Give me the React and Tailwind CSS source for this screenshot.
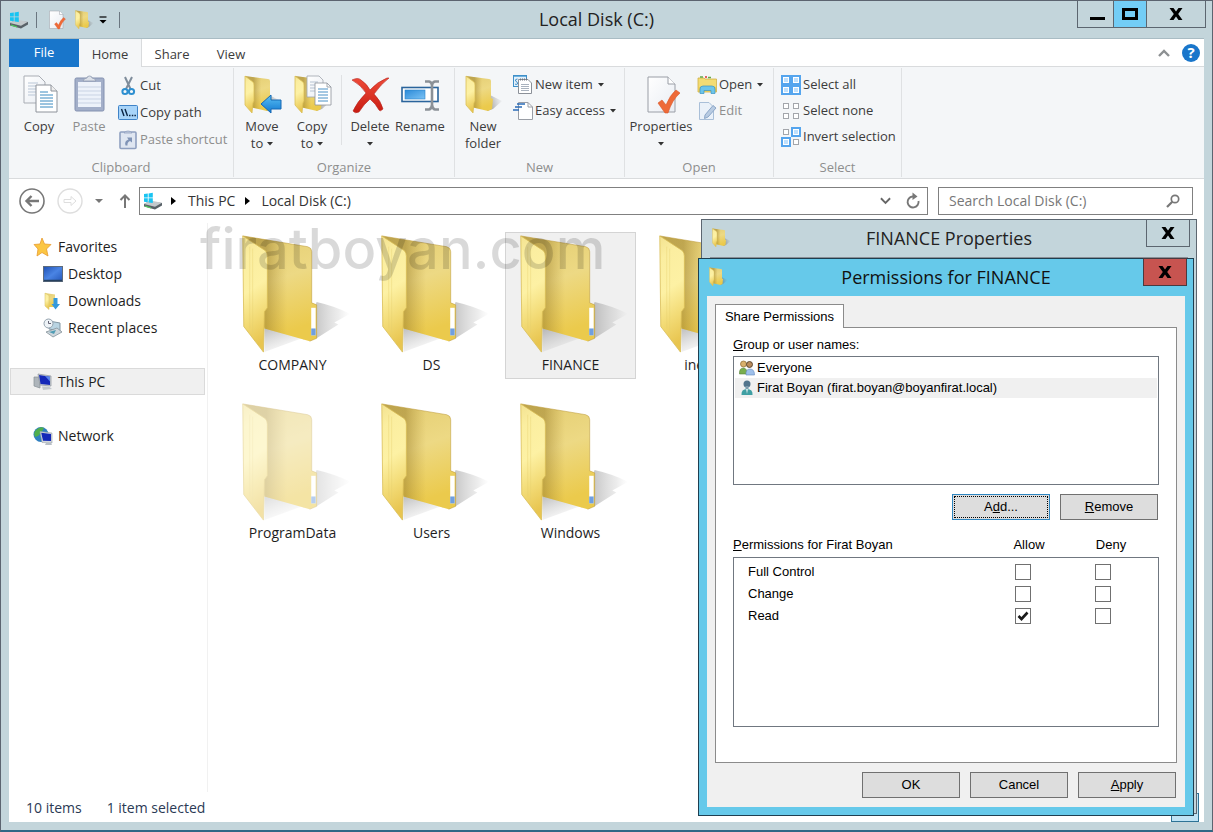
import React, { useState } from 'react'

const Gradients = () => (
  <svg className="absolute w-0 h-0" aria-hidden="true">
    <defs>
      <linearGradient id="flap" x1="0" y1="0" x2="0.15" y2="1">
        <stop offset="0" stopColor="#f3e291" />
        <stop offset="0.2" stopColor="#fbeea0" />
        <stop offset="0.5" stopColor="#fdf1a4" />
        <stop offset="0.75" stopColor="#f3dc78" />
        <stop offset="1" stopColor="#e8c550" />
      </linearGradient>
      <linearGradient id="back" x1="0" y1="0" x2="0.25" y2="1">
        <stop offset="0" stopColor="#e3cc70" />
        <stop offset="0.5" stopColor="#edd984" />
        <stop offset="1" stopColor="#ebca4c" />
      </linearGradient>
      <linearGradient id="fold" x1="0" y1="0" x2="1" y2="0">
        <stop offset="0.32" stopColor="#8a6d1c" stopOpacity="0.42" />
        <stop offset="0.6" stopColor="#a5842b" stopOpacity="0" />
      </linearGradient>
      <linearGradient id="shade" x1="0" y1="0.6" x2="1" y2="0.3">
        <stop offset="0" stopColor="#555" stopOpacity="0.6" />
        <stop offset="1" stopColor="#999" stopOpacity="0.05" />
      </linearGradient>
      <linearGradient id="cast" x1="0" y1="0" x2="1" y2="0">
        <stop offset="0" stopColor="#444" stopOpacity="0.45" />
        <stop offset="0.75" stopColor="#888" stopOpacity="0.16" />
        <stop offset="1" stopColor="#999" stopOpacity="0" />
      </linearGradient>
      <linearGradient id="under" x1="0" y1="0" x2="0.6" y2="1">
        <stop offset="0" stopColor="#555" stopOpacity="0.4" />
        <stop offset="1" stopColor="#999" stopOpacity="0.02" />
      </linearGradient>
      <linearGradient id="blue" x1="0" y1="0" x2="0" y2="1">
        <stop offset="0" stopColor="#5cc2f5" />
        <stop offset="1" stopColor="#1177d0" />
      </linearGradient>
      <linearGradient id="bar" x1="0" y1="0" x2="1" y2="1">
        <stop offset="0" stopColor="#2b8ad8" />
        <stop offset="1" stopColor="#7cc3f5" />
      </linearGradient>
      <linearGradient id="paper" x1="0" y1="0" x2="1" y2="1">
        <stop offset="0" stopColor="#fff" />
        <stop offset="1" stopColor="#e9edf3" />
      </linearGradient>
      <linearGradient id="screen" x1="0" y1="0" x2="1" y2="1">
        <stop offset="0" stopColor="#1e50b4" />
        <stop offset="0.5" stopColor="#4a84e4" />
        <stop offset="1" stopColor="#2456b8" />
      </linearGradient>
      <linearGradient id="red" x1="0" y1="0" x2="0" y2="1">
        <stop offset="0" stopColor="#ee4a38" />
        <stop offset="1" stopColor="#c81c12" />
      </linearGradient>
    </defs>
  </svg>
)

const BigFolder = ({ faded }) => (
  <svg viewBox="0 1 131 122" className={`w-full h-[122px] ${faded ? 'opacity-50' : ''}`}>
    <path d="M90 70Q108 74 124 82L108 91 112 93 90 107 76 108Z" fill="url(#cast)" />
    <path d="M37 96L75 107 37 121Z" fill="url(#under)" />
    <path d="M15 3L81 14Q85 15 85 19L85 71 90 73 90 107 83 110 37 97Z" fill="url(#back)" />
    <path d="M15 3L81 14Q85 15 85 19L85 71 90 73 90 107 83 110 37 97Z" fill="url(#fold)" />
    <path d="M15 3L81 14Q85 15 85 19L85 71 90 73 90 107 83 110" fill="none" stroke="#b8942f" strokeOpacity="0.5" />
    <path d="M84.500 76H89V104H84.500Z" fill="#fff" />
    <path d="M84.500 97H89V104H84.500Z" fill="#6f9fe0" />
    <path d="M15 3L38 18Q40 20 40 24L40 76 37 80 36 121 16 95Z" fill="url(#flap)" stroke="#d9bd55" strokeWidth="0.8" />
    <path d="M22 14V97M25 16V101" stroke="#e6cf6e" strokeWidth="0.7" opacity="0.5" />
  </svg>
)

const FolderShape = () => (
  <>
    <path d="M25 19L39 26 30 34 24 36Z" fill="url(#shade)" />
    <path d="M3 1L26 4Q28 4 28 6L28 23 30 24 29 34 25 36 8 32Z" fill="url(#back)" />
    <path d="M3 1L26 4Q28 4 28 6L28 23 30 24 29 34 25 36 8 32Z" fill="url(#fold)" />
    <path d="M3 1L11 7Q12 8 12 10L12 26 11 28 10 38 3 30Z" fill="url(#flap)" stroke="#dbbf55" strokeWidth="0.8" />
  </>
)

const SmallFolder = ({ className = 'size-5' }) => (
  <svg viewBox="0 0 40 40" className={className}><FolderShape /></svg>
)

const DriveIcon = () => (
  <svg viewBox="0 0 20 18" className="w-5 h-[18px] shrink-0">
    <path d="M1 12L6 9.500 19 11 19 13.500 12 17.500 1 14.500Z" fill="#596268" />
    <path d="M1 12L7 8.500 19 10.800 12 14.800Z" fill="#c3c9cc" />
    <path d="M2 14L8 16" stroke="#4fd05a" strokeWidth="1.200" />
    <path d="M1 2L4.800 1.500V5.500H1ZM5.600 1.400L9.800 0.800V5.500H5.600ZM1 6.300H4.800V10.300L1 9.800ZM5.600 6.300H9.800V11L5.600 10.400Z" fill="#19c4f2" />
  </svg>
)

const PageCheck = ({ className }) => (
  <svg viewBox="0 0 40 40" className={className}>
    <path d="M7 2H27L34 9V37H7Z" fill="url(#paper)" stroke="#9a9ea6" />
    <path d="M27 2V9H34" fill="#fff" stroke="#9a9ea6" />
    <path d="M17 28L21 25 25 30Q29 20 35 15L39 18Q31 25 27 38H24Z" fill="#ee6a38" stroke="#d9572a" strokeWidth="0.6" />
  </svg>
)

const Pages = () => (
  <svg viewBox="0 0 40 40" className="size-10">
    <path d="M5 1H20L26 7V28H5Z" fill="url(#paper)" stroke="#a9adb4" />
    <path d="M9 8H19M9 11H22M9 14H18M9 17H18M9 20H16" stroke="#b9c6d6" />
    <path d="M17 10H32L38 16V37H17Z" fill="#fff" stroke="#8d929a" />
    <path d="M32 10V16H38" fill="#eee" stroke="#8d929a" />
    <path d="M21 17H29M21 20H34M21 23H34M21 26H34M21 29H34M21 32H34" stroke="#3b8ac0" />
  </svg>
)

const Clipboard = () => (
  <svg viewBox="0 0 40 40" className="size-10">
    <rect x="6" y="3" width="29" height="33" rx="1.500" fill="#a3afc9" stroke="#8391b0" />
    <path d="M9 7H32V32H9Z" fill="#edf2fa" />
    <path d="M9 12H32M9 16H32M9 20H32M9 24H32M9 28H32" stroke="#c9d3e4" />
    <path d="M14 6Q15 3 18 3Q18 1 20.500 1Q23 1 23 3Q26 3 27 6Z" fill="#dce1e9" stroke="#8f9ab0" strokeWidth="0.8" />
  </svg>
)

const MoveTo = () => (
  <svg viewBox="0 0 40 40" className="size-10">
    <FolderShape />
    <path d="M19 29L29 20V25H39V34H29V38Z" fill="url(#blue)" stroke="#1668b4" />
  </svg>
)

const CopyTo = () => (
  <svg viewBox="0 0 40 40" className="size-10">
    <FolderShape />
    <path d="M15 1H27L31 5V22H15Z" fill="url(#paper)" stroke="#a0a4ac" strokeWidth="0.8" />
    <path d="M18 7H26M18 10H26M18 13H26M18 16H24" stroke="#b6c3d2" />
    <path d="M23 8H35L39 12V30H23Z" fill="#fff" stroke="#8d929a" strokeWidth="0.8" />
    <path d="M35 8V12H39" fill="none" stroke="#8d929a" strokeWidth="0.8" />
    <path d="M26 14H36M26 17H36M26 20H36M26 23H36M26 26H36" stroke="#4a91c6" />
  </svg>
)

const DeleteX = () => (
  <svg viewBox="0 0 40 40" className="size-10">
    <path d="M2 5Q8 2 11 5Q17 9 20 15Q27 7 37 3H39Q31 9 24 19Q31 26 33 34Q30 37 29 35Q26 29 20 24Q14 29 9 37Q5 39 3 36Q7 27 16 18Q11 10 2 5Z" fill="url(#red)" stroke="#b5211b" strokeWidth="0.6" />
  </svg>
)

const RenameIcon = () => (
  <svg viewBox="0 0 40 40" className="size-10">
    <rect x="2" y="12.500" width="36" height="14" fill="#fff" stroke="#2a649c" strokeWidth="1.600" />
    <rect x="5" y="15" width="20" height="9" fill="url(#bar)" stroke="#2b83c9" strokeWidth="0.6" />
    <path d="M25 6.500H29Q31.500 7 32 10V30Q31.500 34 29 34.500H25M39 6.500H35Q32.500 7 32 10M39 34.500H35Q32.500 34 32 30" fill="none" stroke="#8b9197" strokeWidth="2.600" />
  </svg>
)

const CutIcon = () => (
  <svg viewBox="0 0 20 20" className="size-5">
    <path d="M7 1L12.500 13M14 1L8 13" stroke="#7f8d9b" strokeWidth="2" fill="none" />
    <circle cx="7" cy="15.500" r="2.600" fill="none" stroke="#2d8fd0" strokeWidth="2" />
    <circle cx="13.500" cy="15.500" r="2.600" fill="none" stroke="#2d8fd0" strokeWidth="2" />
  </svg>
)

const PathIcon = () => (
  <svg viewBox="0 0 20 20" className="size-5">
    <rect x="0.500" y="2.500" width="19" height="14" rx="1" fill="#a8d4f9" stroke="#3f83c8" />
    <path d="M3.500 6L6 13M7 6L9.500 13" stroke="#0b2545" strokeWidth="1.400" />
    <path d="M11 12.500H12.500M13.800 12.500H15.300M16.400 12.500H17.900" stroke="#0b2545" strokeWidth="1.400" />
  </svg>
)

const ShortcutIcon = () => (
  <svg viewBox="0 0 20 20" className="size-5">
    <rect x="2" y="2" width="16" height="16.500" rx="1" fill="#dfe6f1" stroke="#8fa0c0" strokeWidth="1.600" />
    <path d="M6 3Q7 1 10 1Q13 1 14 3Z" fill="#c4cddd" stroke="#8fa0c0" strokeWidth="0.8" />
    <path d="M7.500 15.500Q6 11 10.500 9.500L9 7.500H14V12.500L12 11Q9 12 9.500 15.500Z" fill="#7f93b6" />
  </svg>
)

const NewItemIcon = () => (
  <svg viewBox="0 0 20 20" className="size-5">
    <rect x="0.500" y="0.500" width="13" height="11" fill="#e4f1fb" stroke="#3f8fc8" />
    <path d="M1 1.500H13" stroke="#6fb2e0" />
    <path d="M4.500 4Q2 4 2.500 6Q5 7 4.500 9Q3 10 2 9" stroke="#3f8fc8" fill="none" />
    <path d="M5.500 4.500H15L18.500 8V18.500H5.500Z" fill="#fff" stroke="#8b9098" />
    <path d="M7 4.500H15" stroke="#707780" strokeDasharray="1 1" strokeWidth="2" />
    <path d="M8 9.500H16M8 11.500H16M8 13.500H16M8 15.500H16" stroke="#a9b2be" />
  </svg>
)

const EasyIcon = () => (
  <svg viewBox="0 0 20 20" className="size-5">
    <path d="M5.500 1.500H15L19.500 6V18.500H5.500Z" fill="#fff" stroke="#9a9ea6" />
    <path d="M15 1.500V6H19.500" fill="none" stroke="#9a9ea6" />
    <path d="M4 3H12M2 6H9M0 9H6" stroke="#2b6cb8" strokeWidth="1.300" />
  </svg>
)

const OpenIcon = () => (
  <svg viewBox="0 0 20 20" className="size-5">
    <path d="M1 3H7L8 4H19.500V17H1Z" fill="#f3dc74" stroke="#d0b148" strokeWidth="0.8" />
    <path d="M1.500 12H19V16.500H1.500Z" fill="#ecc94f" />
    <path d="M3 2H6M11 2.500H14" stroke="#66a948" strokeWidth="1.500" />
    <path d="M8 2H10" stroke="#d33" strokeWidth="1.500" />
    <path d="M3 18.500V14Q3 11 6 11H15Q18 11 18 14V18.500H14V15.500H7V18.500Z" fill="#6cc5ea" stroke="#3a93c4" strokeWidth="0.7" />
  </svg>
)

const EditIcon = () => (
  <svg viewBox="0 0 20 20" className="size-5">
    <path d="M2.500 1.500H12L16.500 6V18.500H2.500Z" fill="#eaf1f9" stroke="#a9bfd8" />
    <path d="M8 14L16 4.500 19 7 11 16 7.500 17.500Z" fill="#b8cbe2" stroke="#8ba6c8" />
  </svg>
)

const Squares = ({ on }) => (
  <svg viewBox="0 0 20 20" className="size-5">
    {[[0, 0], [10, 0], [0, 10], [10, 10]].map(([x, y], i) => (
      on[i] ? (
        <g key={i}>
          <rect x={x} y={y} width="10" height="10" fill="#55a5ee" />
          <rect x={x + 2.5} y={y + 2.5} width="5" height="5" fill="#bfe0fd" stroke="#fff" />
        </g>
      ) : (
        <rect key={i} x={x + 2.5} y={y + 2.5} width="5" height="5" fill="#fff" stroke="#a3a6ab" />
      )
    ))}
  </svg>
)

const Caret = ({ className = 'text-[#333]' }) => (
  <svg viewBox="0 0 6 4" className={`inline-block w-[6px] h-1 ${className}`}>
    <path d="M0 0H6L3 3.500Z" fill="currentColor" />
  </svg>
)

const CloseX = () => (
  <svg viewBox="0 0 14 12" className="w-[14px] h-3">
    <path d="M0.500 0H4.500L7 3.500 9.500 0H13.500L9.200 6 13.500 12H9.500L7 8.500 4.500 12H0.500L4.800 6Z" fill="#000" />
  </svg>
)

const BigButton = ({ icon, label, second, caret, width = 'w-[50px]', disabled }) => (
  <button className={`flex flex-col items-center shrink-0 ${width} ${disabled ? 'text-[#8e8e8e]' : ''}`}>
    {icon}
    <span className="mt-[3px] leading-[17px] whitespace-nowrap">{label}</span>
    <span className="flex items-center gap-1 h-[17px] leading-[17px]">
      {second}
      {caret && <Caret />}
    </span>
  </button>
)

const SmallButton = ({ icon, label, caret, disabled }) => (
  <button className={`flex items-center h-[26px] whitespace-nowrap ${disabled ? 'text-[#8e8e8e]' : ''}`}>
    {icon}
    <span className="ml-[2px] mr-[5px]">{label}</span>
    {caret && <Caret />}
  </button>
)

const Group = ({ title, width, children }) => (
  <section className={`flex flex-col shrink-0 border-r border-[#dfe1e3] my-px ${width}`}>
    <div className="flex grow">{children}</div>
    <div className="text-center text-[#8e8e8e] leading-5">{title}</div>
  </section>
)

const Ribbon = () => (
  <div className="flex h-28 shrink-0 bg-[#f4f6f8] border-b border-[#d9dbdd] text-[13px] text-[#3c3c3c]">
    <Group title="Clipboard" width="w-[225px]">
      <div className="flex pl-[5px] pt-[7px]">
        <BigButton icon={<Pages />} label="Copy" />
        <BigButton icon={<Clipboard />} label="Paste" disabled />
      </div>
      <div className="flex flex-col pl-1 pt-[5px] gap-px">
        <SmallButton icon={<CutIcon />} label="Cut" />
        <SmallButton icon={<PathIcon />} label="Copy path" />
        <SmallButton icon={<ShortcutIcon />} label="Paste shortcut" disabled />
      </div>
    </Group>
    <Group title="Organize" width="w-[221px]">
      <div className="flex pl-[3px] pt-[7px]">
        <BigButton icon={<MoveTo />} label="Move" second="to" caret />
        <BigButton icon={<CopyTo />} label="Copy" second="to" caret />
        <div className="w-px h-[70px] ml-1 mr-[3px] bg-[#dfe1e3]"></div>
        <BigButton icon={<DeleteX />} label="Delete" caret />
        <BigButton icon={<RenameIcon />} label="Rename" />
      </div>
    </Group>
    <Group title="New" width="w-[170px]">
      <div className="flex pl-[3px] pt-[7px]">
        <BigButton icon={<SmallFolder className="size-10" />} label="New" second="folder" />
      </div>
      <div className="flex flex-col pl-[5px] pt-1">
        <SmallButton icon={<NewItemIcon />} label="New item" caret />
        <SmallButton icon={<EasyIcon />} label="Easy access" caret />
      </div>
    </Group>
    <Group title="Open" width="w-[149px]">
      <div className="flex pl-px pt-[7px]">
        <BigButton icon={<PageCheck className="size-10" />} label="Properties" caret width="w-[70px]" />
      </div>
      <div className="flex flex-col pl-px pt-1">
        <SmallButton icon={<OpenIcon />} label="Open" caret />
        <SmallButton icon={<EditIcon />} label="Edit" disabled />
      </div>
    </Group>
    <Group title="Select" width="w-[128px]">
      <div className="flex flex-col pl-[7px] pt-1">
        <SmallButton icon={<Squares on={[1, 1, 1, 1]} />} label="Select all" />
        <SmallButton icon={<Squares on={[0, 0, 0, 0]} />} label="Select none" />
        <SmallButton icon={<Squares on={[0, 1, 1, 0]} />} label="Invert selection" />
      </div>
    </Group>
  </div>
)

const TitleBar = () => (
  <header className="relative flex h-[37px] shrink-0">
    <div className="flex items-center">
      <DriveIcon />
      <span className="w-px h-4 ml-[7px] mr-[9px] bg-[#6b7680]"></span>
      <PageCheck className="size-5" />
      <SmallFolder className="size-5 ml-2" />
      <svg viewBox="0 0 8 8" className="size-2 ml-[5px]">
        <path d="M0.500 1H7.500" stroke="#000" strokeWidth="1.200" />
        <path d="M0.500 4H7.500L4 7.500Z" />
      </svg>
      <span className="w-px h-4 ml-3 bg-[#6b7680]"></span>
    </div>
    <h1 className="absolute inset-x-0 top-0 pr-5 text-center text-[18px] leading-[37px] text-[#222] pointer-events-none">
      Local Disk (C:)
    </h1>
    <div className="flex ml-auto -mr-[2px] h-[27px] border border-t-0 border-[#5c6670]">
      <button aria-label="Minimize" className="flex items-end justify-center w-[35px] pl-[3px] pb-[7px]">
        <span className="w-[15px] h-[3px] bg-black"></span>
      </button>
      <button aria-label="Maximize" className="flex items-center justify-center w-[34px] bg-[#73cdf6] border-x border-[#5c6670]">
        <span className="w-4 h-3 border-[3px] border-black"></span>
      </button>
      <button aria-label="Close" className="flex items-center justify-center w-[58px]"><CloseX /></button>
    </div>
  </header>
)

const TabBar = () => (
  <nav className="flex h-[29px] shrink-0 bg-white border-t border-[#a9bcc4] text-[13px] text-[#3c3c3c]">
    <button className="w-[70px] bg-[#1976cb] text-white">File</button>
    <button className="w-[63px] pt-1 bg-[#f4f6f8] border-r border-[#d9dbdd]">Home</button>
    <button className="w-[60px] pt-1 border-b border-[#d9dbdd]">Share</button>
    <button className="w-[58px] pt-1 border-b border-[#d9dbdd]">View</button>
    <div className="flex items-center justify-end grow gap-3 pr-1 border-b border-[#d9dbdd]">
      <svg viewBox="0 0 12 8" className="w-3 h-2">
        <path d="M1 7L6 2L11 7" fill="none" stroke="#8d9092" strokeWidth="2.400" />
      </svg>
      <button aria-label="Help" className="flex items-center justify-center size-[18px] rounded-full bg-[#1976cb] text-white font-bold text-[15px]">?</button>
    </div>
  </nav>
)

const AddressBar = () => (
  <div className="flex items-center h-11 shrink-0 pl-[10px] pr-[11px] text-[14px] text-[#333]">
    <button aria-label="Back">
      <svg viewBox="0 0 26 26" className="size-[26px]">
        <circle cx="13" cy="13" r="12" fill="none" stroke="#777" strokeWidth="1.600" />
        <path d="M20 13H8M12.500 8L7.500 13L12.500 18" fill="none" stroke="#777" strokeWidth="2.400" />
      </svg>
    </button>
    <button aria-label="Forward" className="ml-3">
      <svg viewBox="0 0 26 26" className="size-[26px]">
        <circle cx="13" cy="13" r="12" fill="none" stroke="#dedede" strokeWidth="1.400" />
        <path d="M7 11.500H14V8.500L19 13L14 17.500V14.500H7Z" fill="none" stroke="#dedede" />
      </svg>
    </button>
    <svg viewBox="0 0 8 4" className="w-2 h-1 ml-3 text-[#777]"><path d="M0 0H8L4 4Z" fill="currentColor" /></svg>
    <button aria-label="Up" className="ml-4 mr-2">
      <svg viewBox="0 0 12 16" className="w-3 h-4">
        <path d="M6 15V3M1.500 7L6 2.500L10.500 7" fill="none" stroke="#777" strokeWidth="2" />
      </svg>
    </button>
    <div className="flex items-center grow h-7 pl-[3px] pr-[6px] pb-px border border-[#808080]">
      <DriveIcon />
      <svg viewBox="0 0 5 8" className="w-[5px] h-2 ml-2 mr-3"><path d="M0 0L5 4L0 8Z" /></svg>
      <a href="#pc" className="whitespace-nowrap">This PC</a>
      <svg viewBox="0 0 5 8" className="w-[5px] h-2 ml-[10px] mr-[11px]"><path d="M0 0L5 4L0 8Z" /></svg>
      <a href="#c" className="whitespace-nowrap">Local Disk (C:)</a>
      <svg viewBox="0 0 12 8" className="w-[11px] h-2 ml-auto mr-[14px]">
        <path d="M1 1L6 6L11 1" fill="none" stroke="#666" strokeWidth="2" />
      </svg>
      <svg viewBox="0 0 16 18" className="w-4 h-[18px]">
        <path d="M9 4.500H7.500A5.500 5.500 0 1 0 13.500 9" fill="none" stroke="#777" strokeWidth="1.900" />
        <path d="M7.500 0.500L12.500 4.500L7.500 8Z" fill="#777" />
      </svg>
    </div>
    <label className="flex items-center w-[255px] h-7 ml-[10px] pl-[10px] pr-3 pb-px border border-[#808080]">
      <input
        aria-label="Search"
        placeholder="Search Local Disk (C:)"
        className="grow min-w-0 outline-none placeholder:text-[#777]"
      />
      <svg viewBox="0 0 14 14" className="size-[14px]">
        <circle cx="9" cy="5" r="3.700" fill="none" stroke="#777" strokeWidth="1.700" />
        <path d="M6.300 7.700L1 13" stroke="#777" strokeWidth="2.200" />
      </svg>
    </label>
  </div>
)

const StarIcon = () => (
  <svg viewBox="0 0 20 20" className="size-5">
    <path d="M9 1L11.500 7L18 7.500L13.500 12L15 19L9 15.500L4 19L5 12L1 7.500L7 7Z" fill="#fbc643" stroke="#e79a2f" strokeWidth="0.8" />
  </svg>
)

const DesktopIcon = () => (
  <svg viewBox="0 0 20 20" className="size-5">
    <rect x="0.500" y="2.500" width="19" height="15" fill="url(#screen)" stroke="#5d6b7c" />
    <path d="M1 16.500H19" stroke="#26405f" strokeWidth="1.500" />
  </svg>
)

const DownloadsIcon = () => (
  <svg viewBox="0 0 20 20" className="size-5">
    <path d="M2 2L12 3.500V16L4 16Z" fill="url(#back)" />
    <path d="M2 2L6 4.500V18.500L2 15Z" fill="url(#flap)" stroke="#dcc76d" strokeWidth="0.6" />
    <path d="M10.500 7H14.500V13H17L12.500 18.500L8.500 13H10.500Z" fill="#3399dd" />
  </svg>
)

const RecentIcon = () => (
  <svg viewBox="0 0 20 20" className="size-5">
    <path d="M6 3L17 5V13L6 11Z" fill="#b9d4e2" stroke="#8397a3" />
    <path d="M3 14L14 10L19 14L10 19Z" fill="#cfd7dc" stroke="#84929a" strokeWidth="0.8" />
    <path d="M6 14L13 12L11 16Z" fill="#4f9cb4" />
    <circle cx="5.500" cy="5.500" r="4.500" fill="#eef3f7" stroke="#94a2ae" />
    <path d="M5.500 3V5.500H8" stroke="#667" fill="none" />
  </svg>
)

const PcIcon = () => (
  <svg viewBox="0 0 20 20" className="size-5">
    <path d="M1 5H7V16L1 14Z" fill="#aeb5bb" stroke="#878f96" strokeWidth="0.7" />
    <path d="M5 2L18 4V14L7 13Z" fill="#c7cdd3" stroke="#8d949c" strokeWidth="0.7" />
    <path d="M6 3L17 4.700V13L7.500 12Z" fill="#1428b8" />
    <path d="M12 4L17 4.700V9.500Z" fill="#5a86ec" />
    <path d="M9 14.500H16L19 17L10 18Z" fill="#c2c8cd" />
  </svg>
)

const NetworkIcon = () => (
  <svg viewBox="0 0 20 20" className="size-5">
    <circle cx="8" cy="8.500" r="7.500" fill="#2f7fc0" />
    <path d="M3 4Q7 0 11 2L8 7L5 10L2 11Q0 7 3 4Z" fill="#4fae4c" />
    <path d="M7 5.500L19 7V17L9 16.500Z" fill="#d3d8dc" stroke="#99a1a8" strokeWidth="0.6" />
    <path d="M8.200 6.700L18 8V15L10 14.800Z" fill="#1428b8" />
    <path d="M13 17H18L19 19H12Z" fill="#b9c0c6" />
  </svg>
)

const NavItem = ({ icon, label, nested, active, className = '' }) => (
  <a
    href="#"
    className={`flex items-center gap-[5px] h-[27px] border ${nested ? 'pl-8 gap-1' : 'pl-[22px]'} ${active ? 'bg-[#f0f0f0] border-[#dadada]' : 'border-transparent'} ${className}`}
  >
    {icon}
    <span>{label}</span>
  </a>
)

const Sidebar = () => (
  <aside className="w-[199px] shrink-0 pl-px pr-[2px] pt-[10px] border-r border-[#f1f1f1] text-[14px] text-[#1e1e1e]">
    <NavItem icon={<StarIcon />} label="Favorites" />
    <NavItem icon={<DesktopIcon />} label="Desktop" nested />
    <NavItem icon={<DownloadsIcon />} label="Downloads" nested />
    <NavItem icon={<RecentIcon />} label="Recent places" nested />
    <NavItem icon={<PcIcon />} label="This PC" active className="mt-[27px]" />
    <NavItem icon={<NetworkIcon />} label="Network" className="mt-[27px]" />
  </aside>
)

const folders = [
  { name: 'COMPANY' },
  { name: 'DS' },
  { name: 'FINANCE', selected: true },
  { name: 'inetpub' },
  { name: 'ProgramData', faded: true },
  { name: 'Users' },
  { name: 'Windows' },
]

const FolderGrid = () => (
  <main className="relative grow pt-[9px] pl-[19px]">
    <div className="grid grid-cols-[repeat(4,131px)] gap-x-2 gap-y-[21px]">
      {folders.map((f) => (
        <button
          key={f.name}
          className={`flex flex-col h-[147px] border text-[14px] text-[#1e1e1e] ${f.selected ? 'bg-[#f0f0f0] border-[#d4d4d4]' : 'border-transparent'}`}
        >
          <BigFolder faded={f.faded} />
          <span className="self-center leading-5">{f.name}</span>
        </button>
      ))}
    </div>
    <div className="absolute left-[-8px] top-[-6px] font-['Inter',sans-serif] font-medium text-[56px] leading-[64px] text-black/15 pointer-events-none">
      firatboyan.com
    </div>
  </main>
)

const StatusBar = () => (
  <footer className="flex items-center h-[30px] shrink-0 pl-[17px] pr-[5px] text-[14px] text-[#2b3a55]">
    <span>10 items</span>
    <span className="ml-[25px]">1 item selected</span>
    <button aria-label="Large icons view" className="ml-auto w-7 h-[29px] bg-[#bfe3f5] border border-[#2e7396]"></button>
  </footer>
)

const DialogButton = ({ children, focused }) => (
  <button className={`w-[98px] h-[26px] bg-[#dddddd] border ${focused ? 'border-[#2f86c0] p-px' : 'border-[#707070]'}`}>
    {focused ? (
      <span className="flex items-center justify-center size-full border border-dotted border-black">{children}</span>
    ) : children}
  </button>
)

const Check = ({ label, defaultChecked }) => {
  const [on, setOn] = useState(!!defaultChecked)

  return (
    <label className="relative block size-4">
      <input
        type="checkbox"
        aria-label={label}
        checked={on}
        onChange={() => setOn(!on)}
        className="block appearance-none size-4 bg-white border border-[#707070]"
      />
      {on && (
        <svg viewBox="0 0 16 16" className="absolute inset-0 size-4 pointer-events-none">
          <path d="M3.500 8L6.500 11L12.500 4.500" fill="none" stroke="#1a1a1a" strokeWidth="2.600" />
        </svg>
      )}
    </label>
  )
}

const EveryoneIcon = () => (
  <svg viewBox="0 0 16 16" className="size-4">
    <circle cx="4.500" cy="4" r="3" fill="#d9b06c" stroke="#8d6a32" strokeWidth="0.7" />
    <path d="M0.500 14Q0 8 4.500 8Q8 8 8 14Z" fill="#78ad4e" stroke="#56813a" strokeWidth="0.6" />
    <circle cx="10.500" cy="4.500" r="3" fill="#b98b5d" stroke="#54402a" strokeWidth="0.9" />
    <path d="M7 15Q6.500 9 11 9Q15.500 9 15.500 15Z" fill="#9fc0ea" stroke="#6288bd" strokeWidth="0.6" />
  </svg>
)

const UserIcon = () => (
  <svg viewBox="0 0 16 16" className="size-4">
    <circle cx="8" cy="4" r="3.500" fill="#52748c" />
    <path d="M6.500 6H9.500V9H6.500Z" fill="#7d9cae" />
    <path d="M2.500 15Q2 9 8 9Q14 9 13.500 15Z" fill="#3f9fa3" />
    <path d="M7 9H9L8 14Z" fill="#d5e8ea" />
  </svg>
)

const permissions = ['Full Control', 'Change', 'Read']

const PermissionsDialog = () => (
  <div role="dialog" aria-label="Permissions for FINANCE" className="absolute right-[18px] top-[257px] w-[496px] px-2 pb-2 bg-[#66c9ea] border border-[#1f3f50]">
    <div className="relative flex h-[37px]">
      <div className="pt-2 pl-px"><SmallFolder /></div>
      <h2 className="absolute inset-x-0 top-0 text-center text-[18px] leading-[37px] text-[#111] pointer-events-none">
        Permissions for FINANCE
      </h2>
      <button aria-label="Close" className="flex items-center justify-center w-11 h-7 ml-auto -mt-px -mr-[2px] bg-[#c75450] border border-[#4a3a40]">
        <CloseX />
      </button>
    </div>
    <div className="px-2 pt-2 pb-[9px] bg-[#f0f0f0] text-[13px] text-black font-['Liberation_Sans',sans-serif]">
      <button className="relative z-10 block w-[129px] h-6 -mb-px bg-white border border-b-0 border-[#8b8b8b]">
        Share Permissions
      </button>
      <div className="h-[436px] px-[17px] pt-[9px] bg-white border border-[#8b8b8b]">
        <div className="leading-4"><u>G</u>roup or user names:</div>
        <ul className="h-[129px] mt-[3px] p-px border border-[#707780]">
          <li className="flex items-center h-5 pl-1 gap-[2px]"><EveryoneIcon />Everyone</li>
          <li className="flex items-center h-5 pl-1 gap-[2px] bg-[#f0f0f0]"><UserIcon />Firat Boyan (firat.boyan@boyanfirat.local)</li>
        </ul>
        <div className="flex justify-end gap-[10px] mt-[9px] pr-px">
          <DialogButton focused><span>A<u>d</u>d...</span></DialogButton>
          <DialogButton><u>R</u>emove</DialogButton>
        </div>
        <table className="block mt-[17px]">
          <thead className="block">
            <tr className="flex leading-4">
              <th className="grow text-left font-normal"><u>P</u>ermissions for Firat Boyan</th>
              <th className="w-20 font-normal">Allow</th>
              <th className="w-[84px] mr-[6px] font-normal">Deny</th>
            </tr>
          </thead>
          <tbody className="block h-[170px] mt-1 pt-[3px] border border-[#707780]">
            {permissions.map((p) => (
              <tr key={p} className="flex items-center h-[22px] pl-[14px]">
                <td className="grow">{p}</td>
                <td className="w-20"><Check label={`Allow ${p}`} defaultChecked={p === 'Read'} /></td>
                <td className="w-[63px]"><Check label={`Deny ${p}`} /></td>
              </tr>
            ))}
          </tbody>
        </table>
      </div>
      <div className="flex justify-end gap-[10px] mt-[9px] pr-px">
        <DialogButton>OK</DialogButton>
        <DialogButton>Cancel</DialogButton>
        <DialogButton><u>A</u>pply</DialogButton>
      </div>
    </div>
  </div>
)

const PropertiesDialog = () => (
  <div className="absolute right-[15px] top-[218px] bottom-[16px] w-[496px] px-2 bg-[#c3d5db] border border-[#5c6670]">
    <div className="relative flex h-[38px] border-b border-[#8a8f96]">
      <div className="pt-2 pl-px"><SmallFolder /></div>
      <h2 className="absolute inset-x-0 top-0 text-center text-[18px] leading-[37px] text-[#222] pointer-events-none">
        FINANCE Properties
      </h2>
      <button aria-label="Close" className="flex items-center justify-center w-11 h-[27px] ml-auto -mr-[2px] border border-t-0 border-[#5c6670]">
        <CloseX />
      </button>
    </div>
  </div>
)

export default function App() {
  return (
    <div className="relative flex flex-col h-screen px-2 pb-2 bg-[#c3d5db] border border-b-2 border-[#5c6470] border-b-[#2f6885] font-['Open_Sans',sans-serif] overflow-hidden">
      <Gradients />
      <TitleBar />
      <div className="flex flex-col grow min-h-0 bg-white">
        <TabBar />
        <Ribbon />
        <AddressBar />
        <div className="flex grow min-h-0">
          <Sidebar />
          <FolderGrid />
        </div>
        <StatusBar />
      </div>
      <PropertiesDialog />
      <PermissionsDialog />
    </div>
  )
}
